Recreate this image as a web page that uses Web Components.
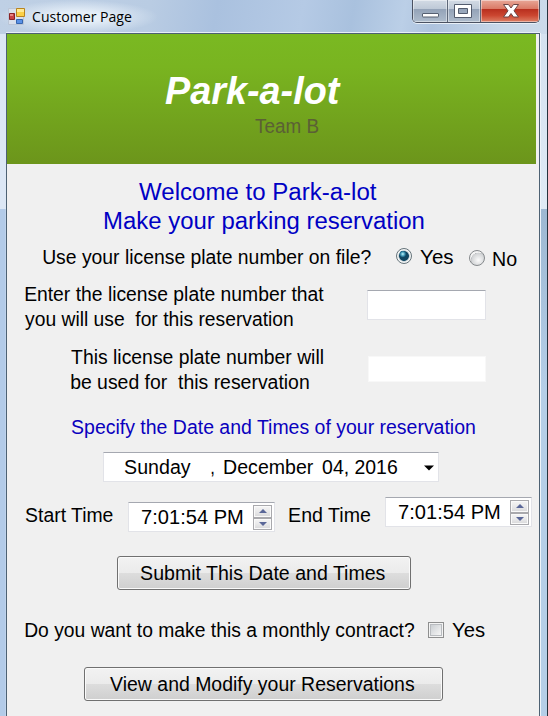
<!DOCTYPE html>
<html lang="en"><head><meta charset="utf-8"><title>Customer Page</title>
<style>html,body{margin:0;width:548px;height:716px;overflow:hidden}body{font-family:"Liberation Sans",Arial,sans-serif;color:#000}
:where(fit-text,radio-dot,text-field,text-lines,check-square,date-picker,time-picker,push-button,park-banner){--l:0px;--t:0px}</style></head>
<body>
<app-window>
  <fit-text slot="title" w="99.5" size="14.8" face="Open Sans" style="--l:33px;--t:4px">Customer Page</fit-text>
  <park-banner></park-banner>
  <form-row style="--t:16px;--h:29px;color:#0000c4"><fit-text w="238" size="23" style="--l:133px">Welcome to Park-a-lot</fit-text></form-row>
  <form-row style="--h:29px;color:#0000c4"><fit-text w="320" size="23" style="--l:98px">Make your parking reservation</fit-text></form-row>
  <form-row style="--t:7px;--h:26px">
    <fit-text w="328" style="--l:37px">Use your license plate number on file?</fit-text>
    <radio-dot checked style="--l:24px;--t:3px"></radio-dot><fit-text w="33.5" style="--l:8.5px">Yes</fit-text>
    <radio-dot style="--l:15px;--t:5px"></radio-dot><fit-text w="24" style="--l:9px;--t:2px">No</fit-text>
  </form-row>
  <form-row style="--t:11px;--h:50px">
    <text-lines style="--l:19px;--w:299px"><fit-text w="299">Enter the license plate number that</fit-text><fit-text w="267.5">you will use  for this reservation</fit-text></text-lines>
    <text-field style="--l:42px;--t:8px"></text-field>
  </form-row>
  <form-row style="--t:13px;--h:50px">
    <text-lines style="--l:65px;--w:253px"><fit-text w="252.5">This license plate number will</fit-text><fit-text w="237.5">be used for  this reservation</fit-text></text-lines>
    <text-field flat style="--l:43px;--t:11px"></text-field>
  </form-row>
  <form-row style="--t:20px;--h:24px;color:#0a00be"><fit-text w="404" style="--l:65px">Specify the Date and Times of your reservation</fit-text></form-row>
  <form-row style="--t:13px;--h:30px"><date-picker style="--l:96px">
    <fit-text w="66.5" style="--l:21px">Sunday</fit-text><fit-text w="2.5" style="--l:20px">,</fit-text><fit-text w="89.5" style="--l:11px">December</fit-text><fit-text w="75.5" style="--l:8.5px">04, 2016</fit-text>
  </date-picker></form-row>
  <form-row style="--t:15px;--h:35px">
    <fit-text w="88.5" style="--l:19px;--t:6px">Start Time</fit-text>
    <time-picker style="--l:13.5px;--t:5px"><fit-text w="101">7:01:54 PM</fit-text></time-picker>
    <fit-text w="82" style="--l:14.5px;--t:6px">End Time</fit-text>
    <time-picker style="--l:13.5px"><fit-text w="101">7:01:54 PM</fit-text></time-picker>
  </form-row>
  <form-row style="--t:24px;--h:34px"><push-button style="--l:110px;--w:294px"><fit-text w="246" style="--t:1px">Submit This Date and Times</fit-text></push-button></form-row>
  <form-row style="--t:28px;--h:24px"><fit-text w="389.5" style="--l:18.5px">Do you want to make this a monthly contract?</fit-text><check-square style="--l:13px;--t:4px"></check-square><fit-text w="33" style="--l:9px">Yes</fit-text></form-row>
  <form-row style="--t:25px;--h:34px"><push-button style="--l:77px;--w:359px"><fit-text w="304.5" style="--t:1px">View and Modify your Reservations</fit-text></push-button></form-row>
</app-window>
<script>
const define=(name,css,html,setup)=>{
  const t=document.createElement('template');
  t.innerHTML=`<style>:host{box-sizing:border-box;flex:none;margin:var(--t,0px) 0 0 var(--l,0px)}*{box-sizing:border-box}${css}</style>${html}`;
  customElements.define(name,class extends HTMLElement{
    connectedCallback(){
      if(this.shadowRoot)return;
      this.attachShadow({mode:'open'}).append(t.content.cloneNode(true));
      if(setup)setup(this);
    }
  });
};
const ctx=document.createElement('canvas').getContext('2d');
// Text is fitted so that its ink spans exactly the requested width.
define('fit-text',`:host{display:block;height:24px;line-height:24px}span{display:inline-block;white-space:pre;transform-origin:0 50%;line-height:inherit}`,`<span><slot></slot></span>`,el=>{
  const s=el.shadowRoot.querySelector('span'),size=+(el.getAttribute('size')||20),w=+el.getAttribute('w');
  const face=el.getAttribute('face')||'Liberation Sans',weight=el.getAttribute('weight')||'';
  ctx.font=`${weight} ${size}px "${face}"`;
  const m=ctx.measureText(el.textContent),k=w/(m.actualBoundingBoxRight+m.actualBoundingBoxLeft);
  s.style.font=`${weight} ${size}px/24px "${face}",sans-serif`;
  s.style.transform=`translateX(${m.actualBoundingBoxLeft*k-.9}px) scaleX(${k})`;
  el.style.width=w+'px';
});
define('form-row',`:host{display:flex;align-items:flex-start;height:var(--h);margin-left:0}`,`<slot></slot>`);
define('text-lines',`:host{display:flex;flex-direction:column;gap:1px;width:var(--w)}`,`<slot></slot>`);
define('app-window',`
:host{display:flex;flex-direction:column;width:548px;height:716px;position:relative;overflow:hidden;
background:linear-gradient(#dce7f5,#dce7f5) 0 34px/7px 175px no-repeat,linear-gradient(90deg,#b3cbe8 0 5px,#bfd3ec 5px) 0 209px/7px 507px no-repeat,linear-gradient(#d5e2f0,#dfeaf5) 540px 34px/8px 175px no-repeat,linear-gradient(#9db8d2,#b5cee8 180px) 540px 209px/8px 507px no-repeat,
radial-gradient(ellipse 80px 17px at 78px 17px,#e6eff8 30%,#e6eff800),linear-gradient(100deg,#bfd0e5 0,#b9cce3 150px,#aac1df 215px,#b5cae5 300px,#a9c1de 350px,#bbcfe7 400px,#aec3de 430px,#c8d8e9 500px,#d4e0ee)}
.bar{display:flex;align-items:flex-start;height:33px;flex:none;position:relative}
.icon{width:18px;height:18px;margin:7px 0 0 8px}
.title{margin-left:-26px}
.controls{display:flex;margin-left:auto;margin-right:8px;width:128px;height:23px;border:1px solid #4b5262;border-top:0;border-radius:0 0 5px 5px;overflow:hidden;box-shadow:0 1px 0 #e9f0f8}
.controls div{display:flex;justify-content:center;box-shadow:inset 0 0 0 1px #ffffff70;background:linear-gradient(#d3dbe5,#bdc8d6 42%,#94a3b8 43%,#aebccc)}
.controls div+div{border-left:1px solid #5d6778}
.controls .x{background:linear-gradient(#e8a797,#d97763 42%,#b9301f 43%,#cb4630 70%,#dd8066)}
.client{flex:1;min-height:0;width:534px;margin-left:6px;border:1px solid #4d6173;border-bottom:0;background:#f0f0f0;box-shadow:0 -1px 0 #e7eff8,1px 0 0 #edf3fa;display:flex;flex-direction:column;overflow:hidden}
.edge{position:absolute;right:0;top:0;width:1px;height:100%;background:#26323d}`,
`<div class="bar"><svg class="icon" viewBox="0 0 18 18"><path fill="#d9e0ec" stroke="#bac5d6" d="M.5 1.5h15v16H.5z"/><path fill="#fbd047" stroke="#b88420" d="M8.5 1.5h8v8h-8z"/><path fill="#ffe993" d="M9 2h7v3H9z"/><path fill="#c84043" stroke="#892125" d="M1.5 6.5h5v6h-5z"/><path fill="#e78583" d="M2 7h3v2H2z"/><path fill="#5a91e6" stroke="#3565ae" d="M8.5 12.5h6v4h-6z"/></svg>
<div class="title"><slot name="title"></slot></div>
<div class="controls"><div style="width:35px"><svg width="34" height="22"><rect x="9.5" y="13.5" width="16" height="3.5" rx=".5" fill="#fff" stroke="#566071"/></svg></div><div style="width:33px"><svg width="32" height="22"><path fill="#fff" fill-rule="evenodd" stroke="#535c6e" d="M6.5 4.500h17v13h-17zM10.500 8.500h9v5h-9z"/></svg></div><div class="x" style="flex:1"><svg width="58" height="22"><path fill="#fff" stroke="#6b4545" d="M22.500 4.500h5l2.500 3.500 2.500-3.500h5l-4.500 6.300 4.500 6.200h-5l-2.500-3.500-2.500 3.500h-5l4.500-6.200z"/></svg></div></div></div>
<div class="client"><slot></slot></div><div class="edge"></div>`);
define('park-banner',`:host{display:flex;flex-direction:column;width:529px;height:130px;background:linear-gradient(#7ab922,#79b420 25%,#6c951b);padding-top:44px}
.name{margin-left:159px;color:#fff;height:42px}.team{margin-left:249px;margin-top:-6px;color:#5b6035}`,
`<div class="name"><fit-text w="176" size="39.5" weight="italic bold">Park-a-lot</fit-text></div><div class="team"><fit-text w="63" size="19.5">Team B</fit-text></div>`);
define('radio-dot',`:host{display:block;width:16px;height:16px;border:1px solid #85898c;border-radius:50%;background:radial-gradient(circle at 60% 65%,#fbfbfb,#d1d3d5 55%,#b7babd 58%,#f4f4f4 62%)}
:host([checked]){border-color:#66747b;background:radial-gradient(circle at 41% 36%,#c8f5fa 0,#5bb1ca 1.5px,#1b6383 3px,#0000 3.5px),radial-gradient(circle,#114762 0 4.5px,#b5c4cb 5.2px,#f4f6f6 6px)}`,``);
define('check-square',`:host{display:block;width:16px;height:16px;border:1px solid #8e8f8f;background:#f4f4f4;padding:1px}div{width:12px;height:12px;border:1px solid #b9bcc0;background:linear-gradient(135deg,#cbcfd3,#f6f6f6)}`,`<div></div>`);
define('text-field',`:host{display:block;width:119px;height:30px;background:#fff;border:1px solid #e2e3e8;border-top-color:#a5a8b0}:host([flat]){width:118px;height:26px;border:1px solid #f8f8f8}`,``);
define('date-picker',`:host{display:flex;width:336px;height:30px;background:#fff;border:1px solid #e2e3e8;border-top-color:#a5a8b0;align-items:flex-start;padding-top:2px}svg{margin:10px 0 0 25.5px}`,`<slot></slot><svg width="10" height="6"><path d="M0 .5h10l-5 5z"/></svg>`);
define('time-picker',`:host{display:flex;width:147px;height:30px;background:#fff;border:1px solid #e2e3e8;border-top-color:#a5a8b0;padding:2px 2px 0 13.5px}
.spin{display:flex;flex-direction:column;width:19px;height:25px;margin:0 0 0 auto}
.spin div{flex:1;border:1px solid #a9a9ad;background:linear-gradient(#f5f5f5,#e9e9ea 50%,#d8d8da);display:flex;align-items:center;justify-content:center;box-shadow:inset 0 0 0 1px #fafafa}`,
`<div class="value"><slot></slot></div><div class="spin"><div><svg width="8" height="4"><path fill="#5a6798" d="M0 4h8L4 0z"/></svg></div><div><svg width="8" height="4"><path fill="#5a6798" d="M0 0h8L4 4z"/></svg></div></div>`);
define('push-button',`:host{display:flex;justify-content:center;align-items:flex-start;width:var(--w);height:34px;border:1px solid #707070;border-radius:3px;padding-top:3px;box-shadow:inset 0 0 0 1px #fafafa;background:linear-gradient(#f2f2f2,#ebebeb 49%,#ddd 50%,#cfcfcf)}`,`<slot></slot>`);
</script>
</body></html>
